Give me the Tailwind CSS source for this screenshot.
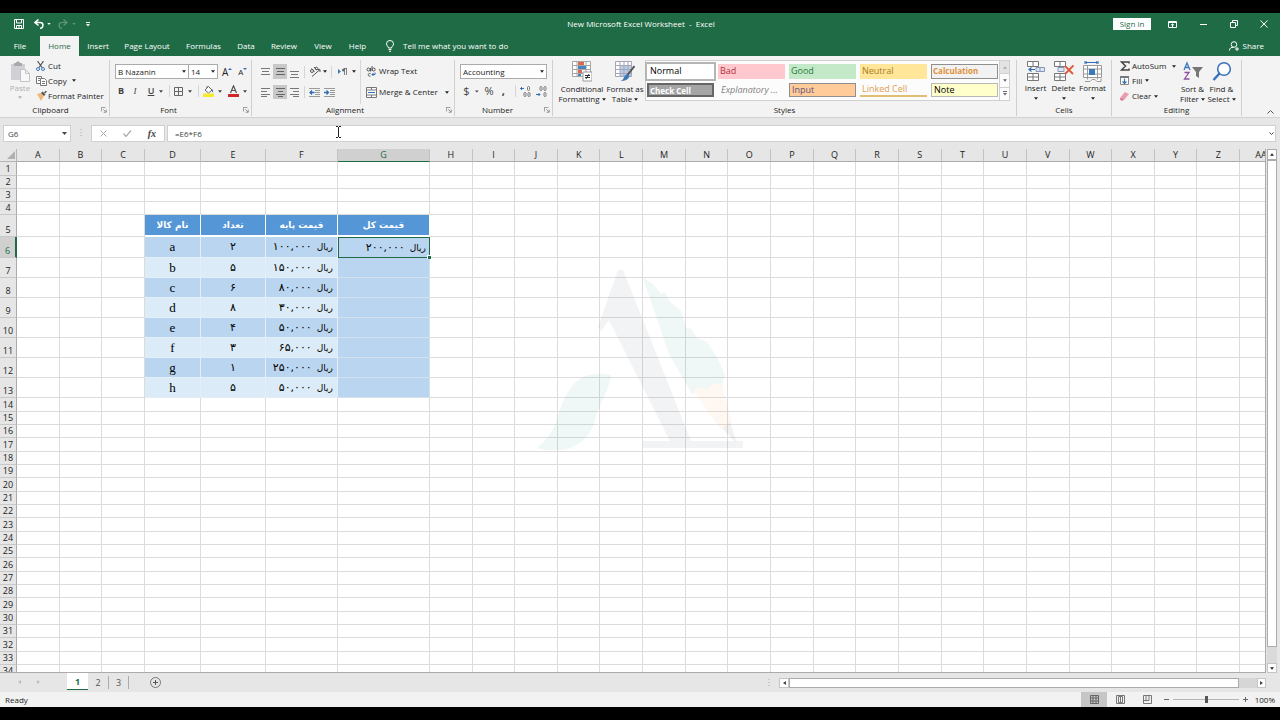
<!DOCTYPE html>
<html lang="en">
<head>
<meta charset="utf-8">
<title>New Microsoft Excel Worksheet - Excel</title>
<script src="https://cdn.jsdelivr.net/npm/@tailwindcss/browser@4"></script>
</head>
<body class="flex h-screen flex-col overflow-hidden bg-black font-['Open_Sans','Noto_Sans',sans-serif] text-[8px] leading-3 text-[#222]">
<svg class="hidden">
  <defs>
    <symbol id="down" viewBox="0 0 5 3"><path d="M0 0h5L2.500 3z" fill="currentColor"/></symbol>
    <symbol id="launch" viewBox="0 0 8 8"><path d="M.5 6V.5H6M3 3l3.500 3.500M7 3.500V7H3.500" fill="none" stroke="#777"/></symbol>
    <symbol id="cells" viewBox="0 0 12 20"><path d="M.5.500h11v5H.5zM6 .5v5M.5 12.500h11v7H.5zM6 12.500v7M.5 16h11" fill="#fff" stroke="#777"/></symbol>
  </defs>
</svg>

<header class="mt-[13px] shrink-0 bg-[#1e6b45] text-white">
  <div class="flex h-[22px] items-center">
    <div class="flex flex-1 items-center pl-3.5">
      <button aria-label="Save"><svg class="size-2.5" viewBox="0 0 10 10"><path d="M.5.500h9v9h-9zM2.500.5v3.500h5V.5M2.500 9.500v-3h5v3M5 7v2" fill="none" stroke="#fff"/></svg></button>
      <button aria-label="Undo" class="ml-2.5 flex items-center gap-[3px]"><svg class="h-2.5 w-2.5" viewBox="0 0 10 10"><path d="M4.500.5L1 3.500l3.500 3M1 3.500h5c4 0 4 5 0 6" fill="none" stroke="#fff" stroke-width="1.500"/></svg><svg class="h-0.5 w-1"><use href="#down"/></svg></button>
      <button aria-label="Redo" class="ml-[7px] flex items-center gap-1 text-white/30"><svg class="h-2.5 w-2.5" viewBox="0 0 10 10"><path d="M5.500.5L9 3.500l-3.500 3M9 3.500H4c-4 0-4 5 0 6" fill="none" stroke="currentColor" stroke-width="1.200"/></svg><svg class="h-0.5 w-1"><use href="#down"/></svg></button>
      <button aria-label="Customize toolbar" class="ml-2.5"><svg class="h-[5px] w-1" viewBox="0 0 4 5"><path d="M0 .5h4" stroke="#fff"/><path d="M0 2h4L2 4.500z" fill="#fff"/></svg></button>
    </div>
    <h1>New Microsoft Excel Worksheet&nbsp; -&nbsp; Excel</h1>
    <div class="flex flex-1 items-center justify-end pr-3">
      <button class="h-3 w-[38px] bg-white text-[#1e6b45]">Sign in</button>
      <button aria-label="Ribbon display options" class="ml-[17px]"><svg class="h-[7px] w-[9px]" viewBox="0 0 9 7"><path d="M.5.500h8v6h-8zM.5 1.500h8M4.500 6V3M3 4.200L4.500 3 6 4.200" fill="none" stroke="#fff"/></svg></button>
      <button aria-label="Minimize" class="ml-[23px]"><svg class="size-2" viewBox="0 0 8 8"><path d="M0 4.500h7" stroke="#fff"/></svg></button>
      <button aria-label="Restore" class="ml-[22px]"><svg class="size-2" viewBox="0 0 8 8"><path d="M.5 2.500h5v5h-5zM2.500 2V.5h5v5H6" fill="none" stroke="#fff"/></svg></button>
      <button aria-label="Close" class="ml-[22px]"><svg class="size-2" viewBox="0 0 8 8"><path d="M.5.500l7 7M7.500.5l-7 7" stroke="#fff"/></svg></button>
    </div>
  </div>
  <nav class="mt-px flex h-5 items-stretch">
    <button class="w-10">File</button>
    <button class="w-[39px] bg-[#f3f3f3] text-[#1e6b45]">Home</button>
    <button class="w-[38px]">Insert</button>
    <button class="w-[60px] whitespace-nowrap">Page Layout</button>
    <button class="w-[53px]">Formulas</button>
    <button class="w-8">Data</button>
    <button class="w-11">Review</button>
    <button class="w-[34px]">View</button>
    <button class="w-[35px]">Help</button>
    <button class="ml-2.5 flex items-center gap-2"><svg class="h-3 w-2.5" viewBox="0 0 10 12"><path d="M3.500 8C3.500 6.500 1.500 6 1.500 3.800a3.500 3.300 0 0 1 7 0C8.500 6 6.500 6.500 6.500 8zM3.500 9.500h3M4 11.300h2" fill="none" stroke="#fff"/></svg>Tell me what you want to do</button>
    <button class="mr-4 ml-auto flex items-center gap-1"><svg class="size-2.5" viewBox="0 0 10 10"><circle cx="5" cy="3.500" r="2.800" fill="none" stroke="#fff"/><path d="M.5 9.500C.5 7 2.500 6 4.500 6.300M6 8h4M8 6v4" fill="none" stroke="#fff"/></svg>Share</button>
  </nav>
</header>

<section aria-label="Ribbon" class="flex h-[62px] shrink-0 border-b border-[#d2d2d2] bg-[#f3f3f3] pt-1 pb-px">
  <!-- Clipboard -->
  <div class="flex w-[110px] shrink-0 flex-col border-r border-[#d0d0d0]">
    <div class="flex min-h-0 flex-1 pl-2">
      <button class="flex w-6 flex-col items-center text-[#b0b0b0]"><svg class="mt-px h-[21px] w-5 shrink-0" viewBox="0 0 20 21"><path d="M1 3h14v16H1z" fill="#d2d0d4"/><path d="M4 2h2c0-2 4-2 4 0h2v3H4z" fill="#a9a9ab"/><path d="M10.500 8.500h5l4 4v8h-9zM15.500 8.500v4h4" fill="#f8f8f8" stroke="#c4c4c8"/></svg><span>Paste</span><svg class="mt-0.5 h-[3px] w-1"><use href="#down"/></svg></button>
      <div class="ml-1 flex flex-col whitespace-nowrap">
        <button class="flex h-[13px] items-center gap-[3px]"><svg class="h-2.5 w-[9px]" viewBox="0 0 9 10"><path d="M1.500 0L6 6.500M7.500 0L3 6.500" stroke="#555" stroke-width="1.200"/><circle cx="2" cy="8" r="1.500" fill="none" stroke="#3c78b8"/><circle cx="7" cy="8" r="1.500" fill="none" stroke="#3c78b8"/></svg>Cut</button>
        <button class="flex h-4 items-center gap-px"><svg class="h-2.5 w-[11px]" viewBox="0 0 11 10"><path d="M.5.500h5v7h-5zM2 2.500h2M2 4.500h2" fill="#fff" stroke="#777"/><path d="M4.500 2.500h4l2 2v5h-6zM6 5.500h3M6 7.500h3" fill="#fff" stroke="#777"/></svg>Copy<svg class="ml-1 h-[3px] w-1"><use href="#down"/></svg></button>
        <button class="flex h-4 items-center gap-px"><svg class="h-2.5 w-[11px]" viewBox="0 0 11 10"><path d="M1 3l4-1 3 3-3 5z" fill="#eeb977"/><path d="M5 2l1.500-1.500 3 3L8 5z" fill="#555"/><path d="M8.500 2L10.500 0" stroke="#555" stroke-width="1.500"/></svg>Format Painter</button>
      </div>
    </div>
    <div class="flex h-3 shrink-0 items-center"><span class="flex-1 text-center">Clipboard</span><button aria-label="Clipboard settings" class="mr-0.5"><svg class="size-1.5"><use href="#launch"/></svg></button></div>
  </div>
  <!-- Font -->
  <div class="flex w-[142px] shrink-0 flex-col border-r border-[#d0d0d0]">
    <div class="flex min-h-0 flex-1 flex-col gap-1.5 pt-1 pl-[5px]">
      <div class="flex h-[15px] items-stretch">
        <div class="relative w-[74px]"><select aria-label="Font name" class="h-full w-full appearance-none border border-[#ababab] bg-white pl-0.5"><option>B Nazanin</option></select><svg class="pointer-events-none absolute top-1.5 right-[3px] h-[3px] w-1"><use href="#down"/></svg></div>
        <div class="relative w-[29px]"><select aria-label="Font size" class="h-full w-full appearance-none border border-l-0 border-[#ababab] bg-white pl-0.5"><option>14</option></select><svg class="pointer-events-none absolute top-1.5 right-[3px] h-[3px] w-1"><use href="#down"/></svg></div>
        <button aria-label="Increase font size" class="ml-1 flex items-center text-[10px]">A<svg class="mb-1.5 h-0.5 w-1" viewBox="0 0 4 2"><path d="M0 2l2-2 2 2z" fill="#2f6db5"/></svg></button>
        <button aria-label="Decrease font size" class="ml-1.5 flex items-center">A<svg class="mb-1.5 h-0.5 w-1" viewBox="0 0 4 2"><path d="M0 0h4L2 2z" fill="#2f6db5"/></svg></button>
      </div>
      <div class="flex h-3 items-center text-[9px] text-[#444]">
        <button class="w-3 font-bold">B</button>
        <button class="ml-0.5 w-3 font-['Liberation_Serif',serif] italic">I</button>
        <button class="ml-1 w-3 font-semibold underline">U</button>
        <svg class="ml-0.5 h-[3px] w-1"><use href="#down"/></svg>
        <div class="ml-1.5 h-3 w-px bg-[#d5d5d5]"></div>
        <button aria-label="Borders" class="ml-1"><svg class="size-[9px]" viewBox="0 0 9 9"><path d="M.5.500h8v8h-8zM4.500 0v9M0 4.500h9" fill="none" stroke="#666"/></svg></button>
        <svg class="ml-[5px] h-[3px] w-1"><use href="#down"/></svg>
        <div class="ml-1.5 h-3 w-px bg-[#d5d5d5]"></div>
        <button aria-label="Fill color" class="ml-1"><svg class="h-3 w-[11px]" viewBox="0 0 11 12"><path d="M2 5l3.500-3.500L9 5 5.500 8zM4 3V1" fill="#fff" stroke="#666"/><path d="M9 4c2 2 1 4 0 3z" fill="#3c78b8"/><path d="M0 8.500h11V12H0z" fill="#f7e92c"/></svg></button>
        <svg class="ml-1 h-[3px] w-1"><use href="#down"/></svg>
        <button aria-label="Font color" class="ml-1.5"><svg class="h-3 w-[11px]" viewBox="0 0 11 12"><path d="M2.500 8L5.500.8 8.500 8M3.700 5.500h3.600" fill="none" stroke="#555" stroke-width="1.200"/><path d="M0 9h11v3H0z" fill="#cf2a27"/></svg></button>
        <svg class="ml-1 h-[3px] w-1"><use href="#down"/></svg>
      </div>
    </div>
    <div class="flex h-3 shrink-0 items-center"><span class="flex-1 pr-4 text-center">Font</span><button aria-label="Font settings" class="mr-0.5"><svg class="size-1.5"><use href="#launch"/></svg></button></div>
  </div>
  <!-- Alignment -->
  <div class="flex w-[203px] shrink-0 flex-col border-r border-[#d0d0d0]">
    <div class="flex min-h-0 flex-1 pl-1.5">
      <div class="flex flex-1 flex-col gap-1.5 pt-1">
        <div class="flex h-[15px] items-center">
          <button aria-label="Top align" class="flex h-[15px] w-[15px] justify-center"><svg class="mt-1 h-[7px] w-[9px]" viewBox="0 0 9 7"><path d="M0 .5h9M1 3.500h7M0 6.500h9" stroke="#777"/></svg></button>
          <button aria-label="Middle align" class="flex h-[15px] w-3.5 items-center justify-center bg-[#c8c8c8]"><svg class="h-[7px] w-[9px]" viewBox="0 0 9 7"><path d="M0 .5h9M1 3.500h7M0 6.500h9" stroke="#666"/></svg></button>
          <button aria-label="Bottom align" class="flex h-[15px] w-[15px] items-end justify-center"><svg class="mb-px h-[7px] w-[9px]" viewBox="0 0 9 7"><path d="M0 .5h9M1 3.500h7M0 6.500h9" stroke="#777"/></svg></button>
          <div class="ml-0.5 h-3 w-px bg-[#d5d5d5]"></div>
          <button aria-label="Orientation" class="ml-1"><svg class="h-[11px] w-3" viewBox="0 0 12 11"><g fill="none" stroke="#555"><circle cx="3" cy="5" r="1.500"/><path d="M2.500 2.500l3 3M5 1l3 3"/><circle cx="7.500" cy="2.500" r="1.300"/><path d="M3 10.500l8-7M11 6V3.500H8.500"/></g></svg></button>
          <svg class="ml-0.5 h-[3px] w-1"><use href="#down"/></svg>
          <div class="ml-1 h-3 w-px bg-[#d5d5d5]"></div>
          <button aria-label="Text direction" class="ml-1.5"><svg class="h-[7px] w-[9px]" viewBox="0 0 9 7"><path d="M0 1l3 2.500L0 6z" fill="#3c78b8"/><path d="M6 .5h3M6.500 0v7M8.500 0v7" stroke="#666" stroke-width=".8"/><circle cx="5.500" cy="2" r="1.500" fill="#666"/></svg></button>
          <svg class="ml-[5px] h-[3px] w-1"><use href="#down"/></svg>
        </div>
        <div class="flex h-[14px] items-center">
          <button aria-label="Align left" class="flex h-[14px] w-[15px] items-center justify-center"><svg class="h-[9px] w-[9px]" viewBox="0 0 9 9"><path d="M0 .5h9M0 3.500h6M0 6.500h9M0 8.500h6" stroke="#777"/></svg></button>
          <button aria-label="Center" class="flex h-[14px] w-3.5 items-center justify-center bg-[#c8c8c8]"><svg class="h-[9px] w-[9px]" viewBox="0 0 9 9"><path d="M0 .5h9M2 3.500h5M0 6.500h9M2 8.500h5" stroke="#666"/></svg></button>
          <button aria-label="Align right" class="flex h-[14px] w-[15px] items-center justify-center"><svg class="h-[9px] w-[9px]" viewBox="0 0 9 9"><path d="M0 .5h9M3 3.500h6M0 6.500h9M3 8.500h6" stroke="#777"/></svg></button>
          <div class="ml-0.5 h-3 w-px bg-[#d5d5d5]"></div>
          <button aria-label="Decrease indent" class="ml-1"><svg class="h-[9px] w-[11px]" viewBox="0 0 11 9"><path d="M0 .5h11M6 2.500h5M6 4.500h5M6 6.500h5M0 8.500h11" stroke="#999"/><path d="M5.500 4.500H1M3 2.500l-2 2 2 2" fill="none" stroke="#2f6db5" stroke-width="1.300"/></svg></button>
          <button aria-label="Increase indent" class="ml-1"><svg class="h-[9px] w-[11px]" viewBox="0 0 11 9"><path d="M0 .5h11M6 2.500h5M6 4.500h5M6 6.500h5M0 8.500h11" stroke="#999"/><path d="M0 4.500h4.500M2.500 2.500l2 2-2 2" fill="none" stroke="#2f6db5" stroke-width="1.300"/></svg></button>
        </div>
      </div>
      <div class="flex w-[94px] flex-col gap-2 border-l border-[#d8d8d8] pt-1 pl-[5px] whitespace-nowrap">
        <button class="flex h-[14px] items-center gap-[3px]"><svg class="h-[11px] w-[10px]" viewBox="0 0 10 11"><g fill="none" stroke="#555"><circle cx="2.500" cy="3.500" r="1.500"/><path d="M4.500 2v3.500M6 0v5"/><circle cx="7.700" cy="3.500" r="1.500"/><path d="M4.500 7.500c-3-1-3 3.500 0 2.500"/></g><path d="M9 6.500v2H6M7.500 7L6 8.500 7.500 10" fill="none" stroke="#2f6db5"/></svg>Wrap Text</button>
        <button class="flex h-3 items-center gap-0.5"><svg class="h-[11px] w-[11px] shrink-0" viewBox="0 0 11 11"><path d="M.5.500h10v10H.5zM.5 3h10M.5 8h10M5.500.5V3M5.500 8v2.500" fill="#fff" stroke="#777"/><path d="M2 5.500h7" stroke="#2f6db5"/></svg>Merge &amp; Center<svg class="ml-[5px] h-[3px] w-1 shrink-0"><use href="#down"/></svg></button>
      </div>
    </div>
    <div class="flex h-3 shrink-0 items-center"><span class="flex-1 pr-2 text-center">Alignment</span><button aria-label="Alignment settings" class="mr-0.5"><svg class="size-1.5"><use href="#launch"/></svg></button></div>
  </div>
  <!-- Number -->
  <div class="flex w-[98px] shrink-0 flex-col border-r border-[#d0d0d0]">
    <div class="flex min-h-0 flex-1 flex-col gap-1.5 px-[5px] pt-1">
      <div class="relative h-[15px]"><select aria-label="Number format" class="h-full w-full appearance-none border border-[#ababab] bg-white pl-0.5"><option>Accounting</option></select><svg class="pointer-events-none absolute top-1.5 right-[3px] h-[3px] w-1"><use href="#down"/></svg></div>
      <div class="flex h-3 items-center text-[11px] text-[#444]">
        <button class="w-3.5">$</button><svg class="ml-0.5 h-[3px] w-1"><use href="#down"/></svg>
        <button class="ml-1.5 w-2.5">%</button><button class="ml-1.5 w-2 font-bold">,</button>
        <div class="ml-2 h-3 w-px bg-[#d5d5d5]"></div>
        <button aria-label="Increase decimal" class="ml-1"><svg class="h-[11px] w-[11px]" viewBox="0 0 11 11"><path d="M4 2.500H.5M2 1L.5 2.500 2 4" fill="none" stroke="#2f6db5"/><g fill="none" stroke="#777"><rect x="7.500" y=".5" width="2" height="4" rx="1"/><rect x="4" y="6.500" width="2" height="4" rx="1"/><rect x="8" y="6.500" width="2" height="4" rx="1"/></g></svg></button>
        <button aria-label="Decrease decimal" class="ml-[5px]"><svg class="h-[11px] w-[11px]" viewBox="0 0 11 11"><path d="M0 8.500h4M2.500 7L4 8.500 2.500 10" fill="none" stroke="#2f6db5"/><g fill="none" stroke="#777"><rect x="4" y=".5" width="2" height="4" rx="1"/><rect x="8" y=".5" width="2" height="4" rx="1"/><rect x="8" y="6.500" width="2" height="4" rx="1"/></g></svg></button>
      </div>
    </div>
    <div class="flex h-3 shrink-0 items-center"><span class="flex-1 pr-1 text-center">Number</span><button aria-label="Number settings" class="mr-0.5"><svg class="size-1.5"><use href="#launch"/></svg></button></div>
  </div>
  <!-- Styles -->
  <div class="flex w-[464px] shrink-0 flex-col border-r border-[#d0d0d0]">
    <div class="flex min-h-0 flex-1 pl-1.5">
      <button class="flex w-[46px] flex-col items-center pt-px leading-[10px]"><svg class="mb-0.5 h-[21px] w-5 shrink-0" viewBox="0 0 20 21"><path d="M.5.500h18v15H.5zM5 .5v15M14 .5v15M.5 4.500h18M.5 8.500h18M.5 12.500h18" fill="#fff" stroke="#a5a5a5"/><path d="M6 1h6v3H6zM6 9h4v3H6z" fill="#d8694c"/><path d="M6 5h8v3H6zM6 13h3v2H6z" fill="#4a83bd"/><path d="M11 11h9v9h-9z" fill="#fff" stroke="#999"/><path d="M13 14.500h5M13 16.500h5M17 13l-3 5" stroke="#333"/></svg>Conditional<span class="flex items-center gap-0.5">Formatting<svg class="h-[3px] w-1 shrink-0"><use href="#down"/></svg></span></button>
      <button class="flex w-10 flex-col items-center pt-px leading-[10px] whitespace-nowrap"><svg class="mb-0.5 h-[21px] w-5 shrink-0" viewBox="0 0 20 21"><path d="M.5.500h16v15H.5z" fill="#fff"/><path d="M5 4.500h12v11H5z" fill="#b9cde8"/><path d="M.5.500h16v15H.5zM5 .5v15M9 .5v15M13 .5v15M.5 4.500h16M.5 8.500h16M.5 12.500h16" fill="none" stroke="#a5a5b5"/><path d="M19.500 5l-7 9" stroke="#555" stroke-width="2"/><path d="M12.500 13l2 2c-1 4-5 5-9 5 4-1 3-6 7-7z" fill="#3c78b8"/></svg>Format as<span class="flex items-center gap-0.5">Table<svg class="h-[3px] w-1 shrink-0"><use href="#down"/></svg></span></button>
      <div class="flex h-[41px] w-[365px] border border-[#d0d0d0] bg-[#fcfcfc]">
        <div class="grid flex-1 grid-cols-5 grid-rows-2 gap-1 px-px py-[3px] text-left text-[9px] whitespace-nowrap">
          <button class="bg-white pl-[3px] text-left text-black outline-2 outline-[#b5b5b5]">Normal</button>
          <button class="bg-[#ffc7ce] pl-0.5 text-left text-[#b0303c]">Bad</button>
          <button class="bg-[#c3e9c9] pl-0.5 text-left text-[#2b7a3a]">Good</button>
          <button class="bg-[#ffe699] pl-0.5 text-left text-[#a87a1c]">Neutral</button>
          <button class="border border-[#8f8f8f] bg-[#f2f2f2] pl-px text-left text-[8px] font-bold text-[#e0903a]">Calculation</button>
          <button class="border-2 border-[#666] bg-[#a5a5a5] pl-px text-left text-[8px] font-bold text-white">Check Cell</button>
          <button class="pl-[3px] text-left text-[#7f7f7f] italic">Explanatory ...</button>
          <button class="border border-[#8f8f8f] bg-[#ffcc99] pl-0.5 text-left text-[#5d5080]">Input</button>
          <button class="border-b-2 border-[#e0bf70] pl-0.5 text-left text-[#e0a050]">Linked Cell</button>
          <button class="border border-[#b8b8b8] bg-[#ffffcc] pl-0.5 text-left text-black">Note</button>
        </div>
        <div class="flex w-[10px] flex-col border-l border-[#d0d0d0] text-[#666]">
          <button aria-label="Previous styles" class="flex flex-1 items-center justify-center bg-[#e3e3e3] text-[#aaa]"><svg class="h-[3px] w-1 rotate-180"><use href="#down"/></svg></button>
          <button aria-label="Next styles" class="flex flex-1 items-center justify-center border-y border-[#d0d0d0]"><svg class="h-[3px] w-1"><use href="#down"/></svg></button>
          <button aria-label="More styles" class="flex flex-1 items-center justify-center"><svg class="h-[5px] w-1" viewBox="0 0 4 5"><path d="M0 .5h4" stroke="#666"/><path d="M0 2h4L2 4.500z" fill="#666"/></svg></button>
        </div>
      </div>
    </div>
    <div class="h-3 shrink-0 text-center">Styles</div>
  </div>
  <!-- Cells -->
  <div class="flex w-[95px] shrink-0 flex-col border-r border-[#d0d0d0]">
    <div class="flex min-h-0 flex-1 pl-1">
      <button class="flex w-[29px] flex-col items-center pt-px"><svg class="h-[21px] w-[18px] shrink-0" viewBox="0 0 18 21"><use href="#cells" width="12" height="20"/><path d="M9 6.500h8.500v4H9zM13 6.500v4" fill="#dce6f4" stroke="#8794b8"/><path d="M8 8.500H2M4.500 6.500l-2.500 2 2.500 2" fill="none" stroke="#2f6db5" stroke-width="1.200"/></svg><span>Insert</span><svg class="mt-[3px] h-[3px] w-1"><use href="#down"/></svg></button>
      <button class="flex w-[27px] flex-col items-center pt-px"><svg class="h-[21px] w-5 shrink-0" viewBox="0 0 20 21"><use href="#cells" width="12" height="20"/><path d="M4 6.500h6v4H4z" fill="#dce6f4" stroke="#8794b8"/><path d="M11 5l8 8M19.500 4.500L11 13" stroke="#dc5a3a" stroke-width="1.800"/></svg><span>Delete</span><svg class="mt-[3px] h-[3px] w-1"><use href="#down"/></svg></button>
      <button class="flex w-[31px] flex-col items-center pt-px"><svg class="h-[21px] w-5 shrink-0" viewBox="0 0 20 21"><path d="M.5 4.500h18v12H.5zM4.500 4.500v14M14.500 4.500v14M.5 8h18M.5 13h18M2 20.500h5l2-2h3l2 2h4v-3" fill="#fff" stroke="#999"/><path d="M6 8h6v6H6z" fill="#3c78b8"/><path d="M2 1.500h13M2 0v3M15 0v3M4 .5l-1.500 1L4 2.500M13 .5l1.500 1L13 2.500" stroke="#2f6db5" fill="none"/></svg><span>Format</span><svg class="mt-[3px] h-[3px] w-1"><use href="#down"/></svg></button>
    </div>
    <div class="h-3 shrink-0 text-center">Cells</div>
  </div>
  <!-- Editing -->
  <div class="flex w-[130px] shrink-0 flex-col border-r border-[#d0d0d0]">
    <div class="flex min-h-0 flex-1 pl-2 whitespace-nowrap">
      <div class="flex w-[58px] flex-col">
        <button class="flex h-[13px] items-center gap-0.5"><svg class="h-[10px] w-2.5 shrink-0" viewBox="0 0 10 10"><path d="M9 2.500V1H1.500l4 4-4 4H9V7.500" fill="none" stroke="#444" stroke-width="1.500"/></svg>AutoSum<svg class="ml-1 h-[3px] w-1 shrink-0"><use href="#down"/></svg></button>
        <button class="flex h-4 items-center gap-[3px]"><svg class="size-[9px]" viewBox="0 0 9 9"><path d="M.5.500h8v8h-8z" fill="#fff" stroke="#888"/><path d="M0 1h9" stroke="#777" stroke-width="2"/><path d="M4.500 2.500v5M2.500 5.500l2 2 2-2" fill="none" stroke="#2f6db5" stroke-width="1.200"/></svg>Fill<svg class="h-[3px] w-1"><use href="#down"/></svg></button>
        <button class="flex h-4 items-center gap-[3px]"><svg class="size-[9px]" viewBox="0 0 9 9"><path d="M0 6l5-6 4 2-5 6-3 .5z" fill="#eb9bb0"/><path d="M0 6l4 2-3 .5z" fill="#c76a85"/></svg>Clear<svg class="h-[3px] w-1"><use href="#down"/></svg></button>
      </div>
      <button class="flex w-[29px] flex-col items-center pt-px leading-[10px]"><svg class="mb-0.5 h-[21px] w-5 shrink-0" viewBox="0 0 20 21"><path d="M1 9L4 2l3 7M2 6.500h4" fill="none" stroke="#3c78c0" stroke-width="1.300"/><path d="M1.500 11.500H6L1.500 18H6.500" fill="none" stroke="#8c50a0" stroke-width="1.300"/><path d="M9 6h11l-4 5v6l-3-2v-4z" fill="#777"/></svg>Sort &amp;<span class="flex items-center gap-0.5">Filter<svg class="h-[3px] w-1"><use href="#down"/></svg></span></button>
      <button class="flex w-[29px] flex-col items-center pt-px leading-[10px]"><svg class="mb-0.5 h-[21px] w-5 shrink-0" viewBox="0 0 20 21"><circle cx="12" cy="8" r="6.300" fill="#fff" stroke="#3c72b8" stroke-width="1.600"/><path d="M7.500 12.500L1.500 19" stroke="#3c72b8" stroke-width="2.500"/></svg>Find &amp;<span class="flex items-center gap-0.5">Select<svg class="h-[3px] w-1"><use href="#down"/></svg></span></button>
    </div>
    <div class="h-3 shrink-0 text-center">Editing</div>
  </div>
  <button aria-label="Collapse ribbon" class="mt-auto mr-1.5 mb-0.5 ml-auto"><svg class="h-1 w-[7px]" viewBox="0 0 7 4"><path d="M.5 3.500l3-3 3 3" fill="none" stroke="#555"/></svg></button>
</section>

<main class="flex min-h-0 flex-1 flex-col bg-[#e6e6e6]">
  <!-- Formula bar -->
  <div class="flex h-[31px] shrink-0 items-start pt-[7px] pr-1 pl-[3px] text-[#444]">
    <div class="relative h-[17px] w-[68px]"><select aria-label="Name box" class="h-full w-full appearance-none border border-[#d0d0d0] bg-white pl-1"><option>G6</option></select><svg class="pointer-events-none absolute top-[7px] right-1 h-[3px] w-[5px]"><use href="#down"/></svg></div>
    <svg class="mt-1 ml-[9px] h-2 w-0.5" viewBox="0 0 2 8"><path d="M1 0v8" stroke="#aaa" stroke-dasharray="1 2"/></svg>
    <div class="ml-[9px] flex h-[17px] w-[74px] items-center justify-between border border-[#d0d0d0] bg-white px-2">
      <button aria-label="Cancel"><svg class="size-[7px]" viewBox="0 0 7 7"><path d="M.5.500l6 6M6.500.5l-6 6" stroke="#aaa"/></svg></button>
      <button aria-label="Enter"><svg class="h-[7px] w-[9px]" viewBox="0 0 9 7"><path d="M.5 3.500l2.500 3 5-6" fill="none" stroke="#aaa" stroke-width="1.200"/></svg></button>
      <button aria-label="Insert function" class="font-['Liberation_Serif',serif] text-[10px] font-bold italic">fx</button>
    </div>
    <div class="relative ml-0.5 h-[17px] flex-1"><input aria-label="Formula bar" value="=E6*F6" class="h-full w-full border border-[#d0d0d0] bg-white pl-[7px]">
      <svg class="absolute top-[7px] right-0.5 h-[3px] w-[5px]" viewBox="0 0 5 3"><path d="M.5.500l2 2 2-2" fill="none" stroke="#444"/></svg>
      <svg class="absolute top-px left-[169px] h-3 w-[5px]" viewBox="0 0 5 12"><path d="M0 .5h2M3 .5h2M2.500 1v10M0 11.500h2M3 11.500h2" stroke="#222"/></svg>
    </div>
  </div>

  <!-- Worksheet -->
  <div class="flex min-h-0 flex-1">
    <div class="relative min-w-0 flex-1 overflow-hidden border-r border-b border-[#ababab] bg-white">
      <table class="w-[calc(100%+18px)] table-fixed border-separate border-spacing-0 text-[9px]">
        <colgroup id="cols"></colgroup>
        <thead><tr id="head" class="h-[13px]"></tr></thead>
        <tbody id="rows"></tbody>
      </table>
      <svg class="pointer-events-none absolute top-[121px] left-[535px] h-[180px] w-[210px]" viewBox="0 0 210 180" aria-hidden="true">
        <g opacity=".06">
          <path d="M83 0h5l68 171h-21L74 50 66 61l-3-4z" fill="#3d4a66"/>
          <path d="M108 171h100v7H108z" fill="#3d4a66"/>
          <path d="M76 105C45 99 34 115 24 142 20 160 12 170 2 178 30 186 50 176 59 154 64 132 73 125 76 105z" fill="#158a80"/>
          <path d="M108 8l10 6 8 10 4-2 4 9 12 10 5 17 5 1 6 9 10 4 11 17 7 16-4 14-9-2-6 8-7-4-7 3-23-40z" fill="#158a80"/>
          <path d="M158 120l7-3 7 4 6-8 9 2 10 38-11 6z" fill="#f08a30"/>
          <path d="M187 158l8-6 7 22z" fill="#222"/>
        </g>
      </svg>
    </div>
    <div class="mr-[3px] ml-px flex w-[10px] flex-col bg-[#dadada]">
      <button aria-label="Scroll up" class="flex h-[11px] items-center justify-center border border-[#ababab] bg-white"><svg class="h-[3px] w-1 rotate-180"><use href="#down"/></svg></button>
      <div class="mb-4 flex-1 border border-[#ababab] bg-white"></div>
      <button aria-label="Scroll down" class="flex h-[10px] items-center justify-center border border-[#c5c5c5] bg-white"><svg class="h-[3px] w-1"><use href="#down"/></svg></button>
    </div>
  </div>

  <!-- Sheet tabs -->
  <div class="flex h-[19px] shrink-0 items-start text-[9px] text-[#555]">
    <button aria-label="Previous sheet" class="mt-[7px] ml-[18px]"><svg class="h-1 w-[3px]" viewBox="0 0 3 4"><path d="M3 0v4L0 2z" fill="#bbb"/></svg></button>
    <button aria-label="Next sheet" class="mt-[7px] ml-4"><svg class="h-1 w-[3px]" viewBox="0 0 3 4"><path d="M0 0v4l3-2z" fill="#bbb"/></svg></button>
    <button class="ml-[27px] h-[17px] w-[21px] border-b border-[#1e6b45] bg-white pt-0.5 font-bold text-[#1e6b45]">1</button>
    <button class="mt-[3px] h-[13px] w-[21px] border-r border-[#ababab]">2</button>
    <button class="mt-[3px] h-[13px] w-5 border-r border-[#ababab]">3</button>
    <button aria-label="New sheet" class="mt-1 ml-[21px]"><svg class="size-[11px]" viewBox="0 0 11 11"><circle cx="5.500" cy="5.500" r="5" fill="none" stroke="#777"/><path d="M5.500 3v5M3 5.500h5" stroke="#555"/></svg></button>
    <svg class="mt-[6px] ml-auto h-2 w-0.5" viewBox="0 0 2 8"><path d="M1 0v8" stroke="#aaa" stroke-dasharray="1 2"/></svg>
    <div class="mt-[5px] mr-[14px] ml-[9px] flex h-[10px] w-[487px] bg-[#d6d6d6]">
      <button aria-label="Scroll left" class="flex w-[10px] items-center justify-center border border-[#c5c5c5] bg-white"><svg class="h-1 w-[3px]" viewBox="0 0 3 4"><path d="M3 0v4L0 2z" fill="#444"/></svg></button>
      <div class="mr-[18px] flex-1 border border-[#ababab] bg-white"></div>
      <button aria-label="Scroll right" class="flex w-[9px] items-center justify-center border border-[#c5c5c5] bg-white"><svg class="h-1 w-[3px]" viewBox="0 0 3 4"><path d="M0 0v4l3-2z" fill="#444"/></svg></button>
    </div>
  </div>
</main>

<footer class="mb-[13px] flex h-[15px] shrink-0 items-center bg-[#f2f2f2]">
  <span class="pl-[5px]">Ready</span>
  <button aria-label="Normal view" class="ml-auto flex h-full w-[26px] items-center justify-center bg-[#c6c6c6]"><svg class="size-[9px]" viewBox="0 0 9 9"><path d="M.5.500h8v8h-8zM3 0v9M6 0v9M0 3h9M0 6h9" fill="none" stroke="#666"/></svg></button>
  <button aria-label="Page layout view" class="flex w-[27px] justify-center"><svg class="size-[9px]" viewBox="0 0 9 9"><path d="M.5.500h8v8h-8zM2.500 1.500h4v6h-4zM4.500 2v5" fill="none" stroke="#777"/></svg></button>
  <button aria-label="Page break view" class="flex w-[26px] justify-center"><svg class="size-[9px]" viewBox="0 0 9 9"><path d="M.5.500h8v8h-8zM3 .5v5M6 .5v5M.5 5.500H6" fill="none" stroke="#777"/></svg></button>
  <button aria-label="Zoom out" class="ml-1 flex"><svg class="size-[5px]" viewBox="0 0 5 5"><path d="M0 2.500h5" stroke="#666"/></svg></button>
  <input type="range" aria-label="Zoom" min="0" max="100" value="50" class="mx-1 h-2 w-[66px] appearance-none bg-[linear-gradient(#b5b5b5,#b5b5b5)] bg-[length:100%_1px] bg-center bg-no-repeat [&::-webkit-slider-thumb]:h-[7px] [&::-webkit-slider-thumb]:w-[3px] [&::-webkit-slider-thumb]:appearance-none [&::-webkit-slider-thumb]:bg-[#555]">
  <button aria-label="Zoom in" class="flex"><svg class="size-[5px]" viewBox="0 0 5 5"><path d="M0 2.500h5M2.500 0v5" stroke="#666"/></svg></button>
  <span class="w-8 pr-[5px] text-right">100%</span>
</footer>

<script>
  const letters = [..."ABCDEFGHIJKLMNOPQRSTUVWXYZ", "AA"];
  const colWidth = { D: "w-[56px]", E: "w-[65px]", F: "w-[72px]", G: "w-[92px]" };
  const items = [["a", "۲", "۱۰۰,۰۰۰"], ["b", "۵", "۱۵۰,۰۰۰"], ["c", "۶", "۸۰,۰۰۰"], ["d", "۸", "۳۰,۰۰۰"],
                 ["e", "۴", "۵۰,۰۰۰"], ["f", "۳", "۶۵,۰۰۰"], ["g", "۱", "۲۵۰,۰۰۰"], ["h", "۵", "۵۰,۰۰۰"]];
  const titles = { D: "نام کالا", E: "تعداد", F: "قیمت پایه", G: "قیمت کل" };

  document.getElementById("cols").innerHTML = '<col class="w-[17px]">' + letters.map(l => `<col class="${colWidth[l] || ""}">`).join("");
  document.getElementById("head").innerHTML =
    '<th class="h-[13px] border-r border-b border-[#b5b5b5] bg-[#e6e6e6] p-0"><svg class="mr-px ml-auto size-2" viewBox="0 0 8 8"><path d="M8 0v8H0z" fill="#b0b0b0"/></svg></th>' +
    letters.map(l => `<th scope="col" class="${l === "G" ? "border-b-[#1e6b45] bg-[#d0d0d0] text-[#1e6b45]" : "border-b-[#ababab] bg-[#e6e6e6]"} h-[13px] border-r border-b border-r-[#c2c2c2] p-0 pb-px text-center font-medium leading-[10px]">${l}</th>`).join("");

  const money = v => `<span dir="rtl" class="flex items-center gap-[5px] pr-1 font-['DejaVu_Sans',sans-serif] text-[9px] whitespace-nowrap"><span>ریال</span><span class="text-[11px]">${v}</span></span>`;
  const cell = (l, n) => {
    if (n === 5 && titles[l]) return `<td class="border-r border-b-2 border-white bg-[#5596d7] p-0 text-center font-['DejaVu_Sans',sans-serif] text-[9px] font-bold text-white">${titles[l]}</td>`;
    if (n >= 6 && n <= 13 && titles[l]) {
      const it = items[n - 6];
      const bg = l === "G" || n % 2 === 0 ? "bg-[#bad5ef]" : "bg-[#dbebf7]";
      if (l === "D") return `<td class="${bg} border-r border-b border-[#e4eef8] p-0 text-center font-['Liberation_Serif',serif] text-[13px] text-black">${it[0]}</td>`;
      if (l === "E") return `<td class="${bg} border-r border-b border-[#e4eef8] p-0 text-center font-['DejaVu_Sans',sans-serif] text-[11px] text-black">${it[1]}</td>`;
      if (l === "F") return `<td class="${bg} border-r border-b border-[#e4eef8] p-0 text-black">${money(it[2])}</td>`;
      if (n === 6) return `<td class="${bg} relative p-0 text-black outline -outline-offset-1 outline-[#1e6b45]">${money("۲۰۰,۰۰۰")}<i class="absolute -right-px -bottom-px size-1 border-t border-l border-white bg-[#1e6b45]"></i></td>`;
      return `<td class="${bg} border-r border-b border-[#d3e0ee] p-0"></td>`;
    }
    return '<td class="border-r border-b border-[#dcdcdc] p-0"></td>';
  };
  const height = n => n === 5 ? "h-[22px]" : n === 6 ? "h-[21px]" : n > 6 && n < 14 ? "h-[20px]" : n === 1 || (n > 13 && n % 3 === 2) ? "h-[14px]" : "h-[13px]";
  document.getElementById("rows").innerHTML = Array.from({ length: 34 }, (_, i) => i + 1).map(n =>
    `<tr class="${height(n)}"><th scope="row" class="${n === 6 ? "border-r-2 border-r-[#1e6b45] bg-[#d0d0d0] text-[#1e6b45]" : "border-r border-r-[#ababab] bg-[#e6e6e6]"} border-b border-b-[#c8c8c8] p-0 text-center align-bottom font-medium leading-3">${n}</th>${letters.map(l => cell(l, n)).join("")}</tr>`).join("");
</script>
</body>
</html>
